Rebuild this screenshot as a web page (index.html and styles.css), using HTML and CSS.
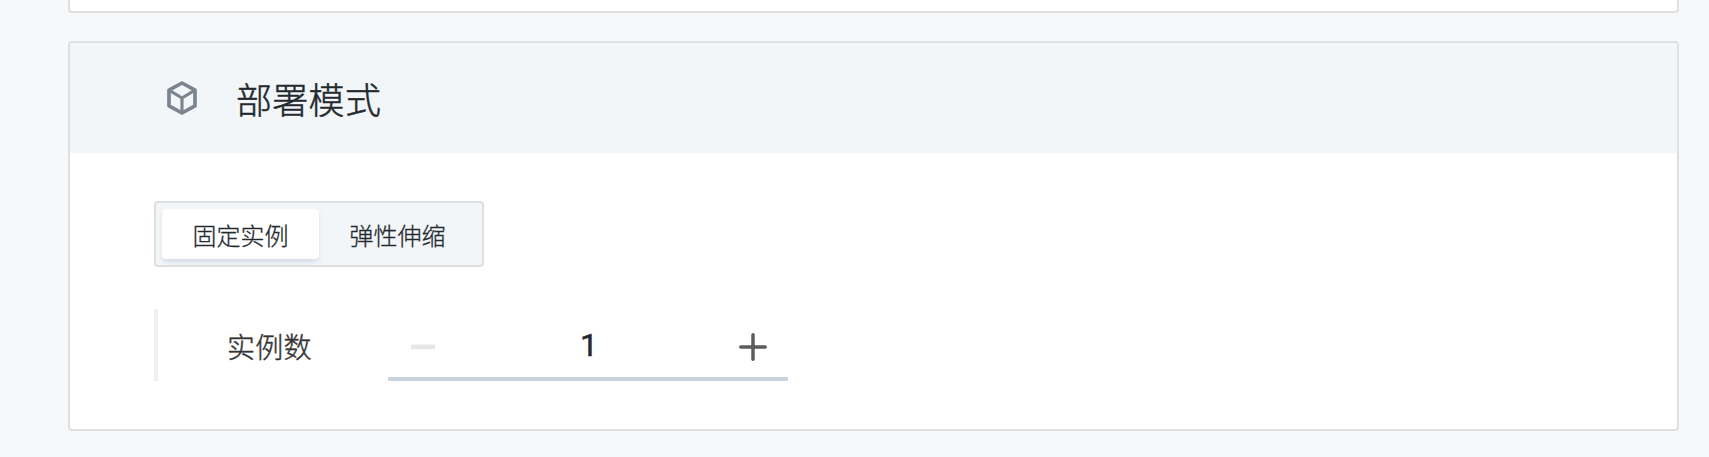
FILE: index.html
```
<!DOCTYPE html>
<html lang="zh-CN">
<head>
<meta charset="utf-8">
<title>部署模式</title>
<link rel="stylesheet" href="styles.css">
</head>
<body>
<main class="page">
  <section class="card card-previous"></section>
  <section class="card">
    <header class="card-header">
      <svg class="cube" viewBox="0 0 30 34" fill="none" stroke="#7c858f" stroke-width="3.7" stroke-linejoin="round">
        <path d="M15 2 28 9.2V24.8L15 32 2 24.8V9.2Z"/>
        <path d="M2 9.2 15 17 28 9.2M15 17V32" stroke-width="3.2"/>
      </svg>
      <h2 class="title">部署模式</h2>
    </header>
    <div class="card-body">
      <div class="tabs">
        <button class="tab tab-active">固定实例</button>
        <button class="tab">弹性伸缩</button>
      </div>
      <div class="field">
        <span class="label">实例数</span>
        <div class="stepper">
          <svg class="minus" viewBox="0 0 24 28"><path d="M0 13.8H24" stroke="#e6e6e6" stroke-width="4.6"/></svg>
          <span class="value">1</span>
          <svg class="plus" viewBox="0 0 28 28"><path d="M14 1.8V26.2M1.8 14H26.2" stroke="#5c5c5c" stroke-width="3.5" stroke-linecap="round"/></svg>
        </div>
      </div>
    </div>
  </section>
</main>
</body>
</html>
```
FILE: styles.css
```
* { box-sizing: border-box; }
body {
  margin: 0;
  height: 457px;
  overflow: hidden;
  background: #f7f8fa;
  color: #24292e;
  font-family: Roboto, "Noto Sans CJK SC", sans-serif;
}
.page {
  display: flex;
  flex-direction: column;
  gap: 28px;
  padding-left: 68px;
}
.card {
  width: 1611px;
  height: 390px;
  border: 2px solid #dddfe1;
  border-radius: 4px;
  background: #fff;
  overflow: hidden;
}
.card-previous {
  height: 13px;
  border-top: 0;
  border-radius: 0 0 4px 4px;
}
.card-header {
  display: flex;
  align-items: center;
  gap: 39px;
  height: 110px;
  padding-left: 97px;
  background: #f2f6f9;
}
.cube { width: 30px; height: 34px; }
.title {
  margin: 8px 0 0;
  font-size: 36px;
  line-height: 44px;
  font-weight: 300;
  letter-spacing: 0.3px;
  -webkit-text-stroke: 0.5px currentColor;
}
.card-body { padding: 48px 84px; }
.tabs {
  display: flex;
  width: 330px;
  height: 66px;
  padding: 6px;
  border: 2px solid #dddfe1;
  border-radius: 4px;
  background: #f2f6f9;
}
.tab {
  width: 157px;
  height: 50px;
  padding: 5px 0 0;
  border: 0;
  border-radius: 4px;
  background: transparent;
  color: inherit;
  font: 300 24px/36px Roboto, "Noto Sans CJK SC", sans-serif;
  -webkit-text-stroke: 0.3px currentColor;
}
.tab-active {
  background: #fff;
  box-shadow: 0 3px 4px #d5dde5;
}
.field {
  display: flex;
  height: 72px;
  margin-top: 42px;
  padding-left: 69px;
  border-left: 4px solid #f0f0f0;
}
.label {
  width: 161px;
  padding-top: 20px;
  color: #333;
  font-size: 28px;
  line-height: 40px;
  font-weight: 300;
  letter-spacing: 0.3px;
  -webkit-text-stroke: 0.4px currentColor;
}
.stepper {
  display: flex;
  align-items: center;
  justify-content: space-between;
  width: 400px;
  padding: 8px 21px 0 23px;
  border-bottom: 4px solid #c9d3df;
}
.minus { width: 24px; height: 28px; }
.plus { width: 28px; height: 28px; }
.value {
  margin: 0 0 4px 4px;
  font-size: 32px;
  line-height: 36px;
  -webkit-text-stroke: 0.5px currentColor;
}
```
